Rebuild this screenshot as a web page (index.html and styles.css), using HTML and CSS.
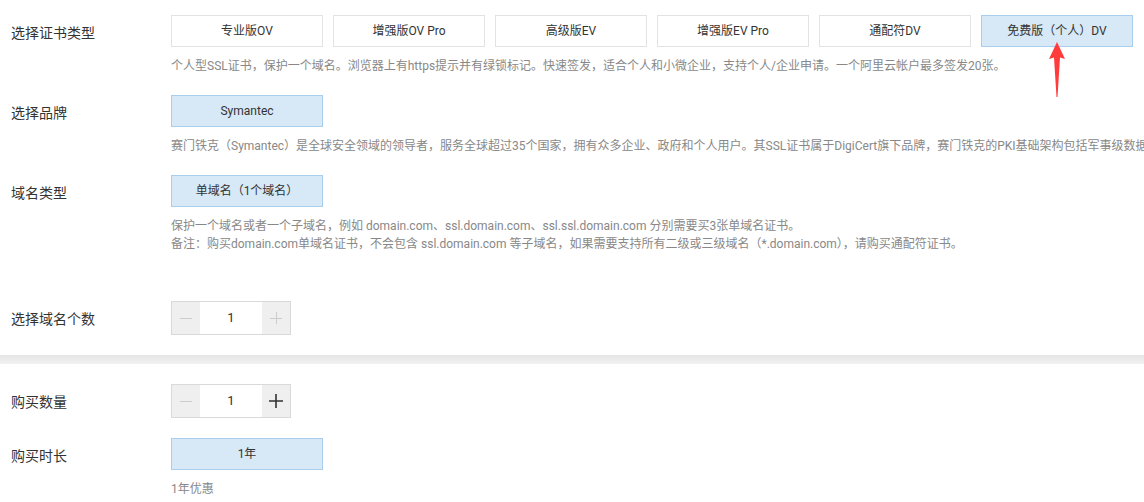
FILE: index.html
```html
<!DOCTYPE html>
<html lang="zh-CN">
<head>
<meta charset="utf-8">
<title>SSL证书购买</title>
<link rel="stylesheet" href="styles.css">
</head>
<body>
<div class="page">
  <section class="panel panel-top">
    <div class="row">
      <div class="label">选择证书类型</div>
      <div class="field">
        <div class="options">
          <div class="opt">专业版OV</div>
          <div class="opt">增强版OV Pro</div>
          <div class="opt">高级版EV</div>
          <div class="opt">增强版EV Pro</div>
          <div class="opt">通配符DV</div>
          <div class="opt active">免费版（个人）DV</div>
        </div>
        <p class="desc">个人型SSL证书，保护一个域名。浏览器上有https提示并有绿锁标记。快速签发，适合个人和小微企业，支持个人/企业申请。一个阿里云帐户最多签发20张。</p>
      </div>
    </div>
    <div class="row">
      <div class="label">选择品牌</div>
      <div class="field">
        <div class="options">
          <div class="opt active">Symantec</div>
        </div>
        <p class="desc nowrap">赛门铁克（Symantec）是全球安全领域的领导者，服务全球超过35个国家，拥有众多企业、政府和个人用户。其SSL证书属于DigiCert旗下品牌，赛门铁克的PKI基础架构包括军事级数据中心和灾难恢复站点，为客户提供安全可靠的服务。</p>
      </div>
    </div>
    <div class="row row-spaced">
      <div class="label">域名类型</div>
      <div class="field">
        <div class="options">
          <div class="opt active">单域名（1个域名）</div>
        </div>
        <p class="desc">保护一个域名或者一个子域名，例如 domain.com、ssl.domain.com、ssl.ssl.domain.com 分别需要买3张单域名证书。<br>备注：购买domain.com单域名证书，不会包含 ssl.domain.com 等子域名，如果需要支持所有二级或三级域名（*.domain.com），请购买通配符证书。</p>
      </div>
    </div>
    <div class="row">
      <div class="label">选择域名个数</div>
      <div class="field">
        <div class="stepper">
          <span class="step-btn"><svg width="12" height="12" viewBox="0 0 12 12"><path d="M0 6.5H12" stroke="#cccccc" stroke-width="1"/></svg></span>
          <span class="step-val">1</span>
          <span class="step-btn"><svg width="12" height="12" viewBox="0 0 12 12"><path d="M0 6.5H12M6.5 0V12" stroke="#cccccc" stroke-width="1"/></svg></span>
        </div>
      </div>
    </div>
  </section>
  <div class="divider"></div>
  <section class="panel panel-bottom">
    <div class="row">
      <div class="label">购买数量</div>
      <div class="field">
        <div class="stepper">
          <span class="step-btn"><svg width="12" height="12" viewBox="0 0 12 12"><path d="M0 6.5H12" stroke="#cccccc" stroke-width="1"/></svg></span>
          <span class="step-val">1</span>
          <span class="step-btn"><svg width="14" height="14" viewBox="0 0 14 14"><path d="M0 7H14M7 0V14" stroke="#333333" stroke-width="1.6"/></svg></span>
        </div>
      </div>
    </div>
    <div class="row">
      <div class="label">购买时长</div>
      <div class="field">
        <div class="options">
          <div class="opt active">1年</div>
        </div>
        <p class="desc">1年优惠</p>
      </div>
    </div>
  </section>
  <svg class="arrow" width="18" height="58" viewBox="0 0 18 58"><polygon points="9,1 17,18 12,16.5 9.5,56 8.5,56 6,16.5 1,18" fill="#ff3b3b"/></svg>
</div>
</body>
</html>
```
FILE: styles.css
```css
html, body {
  margin: 0;
  padding: 0;
  background: #ffffff;
  overflow: hidden;
}
body {
  font-family: Roboto, "Noto Sans CJK SC", sans-serif;
  color: #333333;
}
.page {
  position: relative;
  width: 1144px;
}
.panel {
  padding-left: 11px;
  display: flex;
  flex-direction: column;
  gap: 20px;
}
.panel-top {
  padding-top: 15px;
  padding-bottom: 20px;
}
.panel-bottom {
  padding-top: 20px;
}
.row {
  display: grid;
  grid-template-columns: 160px 1fr;
  align-items: start;
}
.row-spaced {
  margin-bottom: 28px;
}
.label {
  font-size: 14px;
  line-height: 32px;
  margin-top: 2px;
  color: #333333;
  white-space: nowrap;
}
.field {
  min-width: 0;
}
.options {
  display: flex;
  gap: 10px;
}
.opt {
  box-sizing: border-box;
  width: 152px;
  height: 32px;
  border: 1px solid #e3e3e3;
  background: #ffffff;
  font-size: 12px;
  line-height: 30px;
  text-align: center;
  color: #333333;
  white-space: nowrap;
}
.opt.active {
  background: #d7e8f6;
  border-color: #a9cdec;
}
.desc {
  margin: 10px 0 0;
  font-size: 12px;
  line-height: 18px;
  color: #888888;
  white-space: nowrap;
}
.nowrap {
  white-space: nowrap;
}
.stepper {
  box-sizing: border-box;
  display: flex;
  width: 120px;
  height: 34px;
  border: 1px solid #d9d9d9;
}
.step-btn {
  width: 28px;
  background: #efefef;
  display: flex;
  align-items: center;
  justify-content: center;
}
.step-val {
  flex: 1;
  background: #ffffff;
  font-size: 13px;
  line-height: 32px;
  text-align: center;
  color: #333333;
}
.divider {
  height: 9px;
  background: linear-gradient(#e5e5e5, #f2f2f2);
}
.arrow {
  position: absolute;
  left: 1048px;
  top: 41px;
}
```
